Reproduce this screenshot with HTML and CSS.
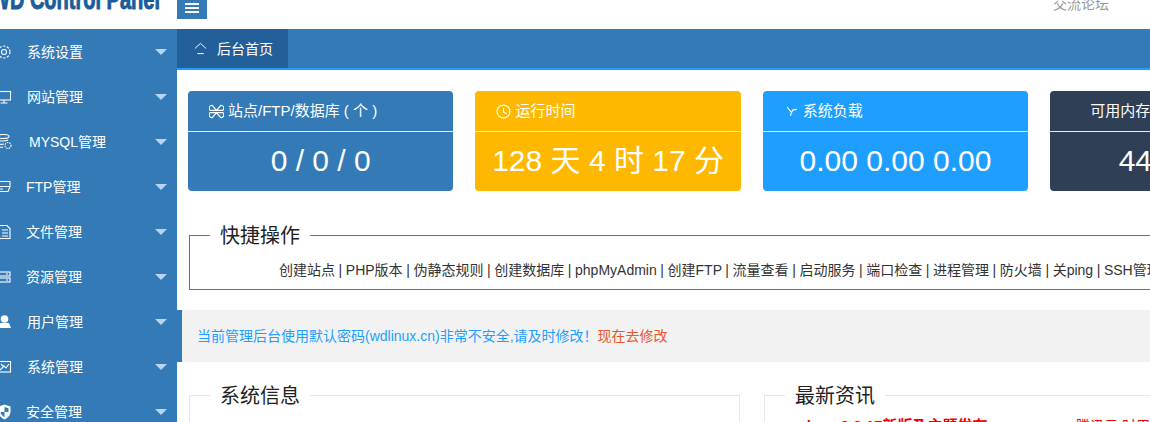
FILE: index.html
```html
<!DOCTYPE html>
<html lang="zh-CN">
<head>
<meta charset="utf-8">
<title>WD Control Panel</title>
<link rel="stylesheet" href="styles.css">
</head>
<body>
<div class="app">
  <header class="topbar">
    <div class="logo"><span class="logo-text">WD Control Panel</span></div>
    <button class="toggle" type="button" aria-label="菜单"><span></span><span></span><span></span></button>
    <a class="forum">交流论坛</a>
  </header>
  <nav class="side">
    <a class="item"><svg class="ico" viewBox="0 0 16 16"><circle cx="8" cy="8" r="2.500"/><circle cx="8" cy="8" r="6" stroke-dasharray="2.400 1.400"/></svg><span class="label">系统设置</span><i class="caret"></i></a>
    <a class="item"><svg class="ico" viewBox="0 0 16 16"><rect x="1.500" y="2.500" width="13" height="8.500"/><path d="M8 11v3M4.500 14h7"/></svg><span class="label">网站管理</span><i class="caret"></i></a>
    <a class="item"><svg class="ico" viewBox="0 0 16 16"><ellipse cx="7" cy="2.500" rx="6" ry="2"/><path d="M1 5.500c2 2 8 2 11 .5M1 9c2 1.500 5 1.500 7 1M1 12c2 1.500 5 1.500 6 1"/><circle cx="12" cy="11.500" r="3" stroke-dasharray="1.500 1"/></svg><span class="label label-wide">MYSQL管理</span><i class="caret"></i></a>
    <a class="item"><svg class="ico" viewBox="0 0 16 16"><path d="M3 2.500h11v5H3M9 7.500h5l-2 5H1M2 10h5"/></svg><span class="label label-tight">FTP管理</span><i class="caret"></i></a>
    <a class="item"><svg class="ico" viewBox="0 0 16 16"><path d="M4 1.500h7l3 3v10H4M6 6h6M6 9h6M6 12h6"/></svg><span class="label label-tight">文件管理</span><i class="caret"></i></a>
    <a class="item"><svg class="ico" viewBox="0 0 16 16"><rect x="3" y="3" width="11" height="4"/><rect x="3" y="9" width="11" height="4"/><path d="M10 5h2M10 11h2"/></svg><span class="label label-tight">资源管理</span><i class="caret"></i></a>
    <a class="item"><svg class="ico" viewBox="0 0 16 16"><circle class="solid" cx="8.500" cy="5" r="3.800"/><path class="solid" d="M4 9h9l2 5H3z"/></svg><span class="label">用户管理</span><i class="caret"></i></a>
    <a class="item"><svg class="ico" viewBox="0 0 16 16"><rect x="2.500" y="2.500" width="12" height="10.500"/><path d="M4 11l4-4 2 2 3-4M5 5l3 3"/></svg><span class="label">系统管理</span><i class="caret"></i></a>
    <a class="item"><svg class="ico" viewBox="0 0 16 16"><path class="solid" d="M8.500 .5l6 2v5c0 4-3 6.500-6 8-3-1.500-6-4-6-8v-5zM8.500 3v5h-4c.3 2.500 2 4 4 5.300V8h4V4.200z" fill-rule="evenodd"/></svg><span class="label label-tight">安全管理</span><i class="caret"></i></a>
  </nav>
  <main class="main">
    <div class="tabs">
      <a class="tab"><svg class="tab-ico" viewBox="0 0 14 14"><path d="M1 7l6-5.500L13 7M3.500 12.500h7"/></svg>后台首页</a>
    </div>
    <section class="cards">
      <article class="card card-blue">
        <h3 class="card-head"><svg class="card-ico" viewBox="0 0 14 14"><path d="M7 6L3 1.200a2.800 2.800 0 0 0-2 4.800zM7 6l4-4.800a2.800 2.800 0 0 1 2 4.800zM7 8l-4 4.800a2.800 2.800 0 0 1-2-4.800zM7 8l4 4.800a2.800 2.800 0 0 0 2-4.800z"/></svg>站点/FTP/数据库 ( 个 )</h3>
        <div class="card-val">0 / 0 / 0</div>
      </article>
      <article class="card card-amber">
        <h3 class="card-head"><svg class="card-ico" viewBox="0 0 14 14"><circle cx="7" cy="7" r="6"/><path d="M7 3.500V7.500L10 9"/></svg>运行时间</h3>
        <div class="card-val">128 天 4 时 17 分</div>
      </article>
      <article class="card card-sky">
        <h3 class="card-head"><svg class="card-ico" viewBox="0 0 14 14"><path d="M3 3l4 5 1.500-2.500L12 5M6 11l1-3"/></svg>系统负载</h3>
        <div class="card-val">0.00 0.00 0.00</div>
      </article>
      <article class="card card-navy">
        <h3 class="card-head card-head-plain">可用内存</h3>
        <div class="card-val">441.2 MB</div>
      </article>
    </section>
    <fieldset class="box box-quick">
      <legend class="box-title">快捷操作</legend>
      <p class="links">创建站点 | PHP版本 | 伪静态规则 | 创建数据库 | phpMyAdmin | 创建FTP | 流量查看 | 启动服务 | 端口检查 | 进程管理 | 防火墙 | 关ping | SSH管理</p>
    </fieldset>
    <div class="notice">当前管理后台使用默认密码(wdlinux.cn)非常不安全,请及时修改！<a class="notice-link">现在去修改</a></div>
    <div class="cols">
      <fieldset class="box box-info">
        <legend class="box-title">系统信息</legend>
      </fieldset>
      <fieldset class="box box-news">
        <legend class="box-title">最新资讯</legend>
        <div class="news"><b class="news-main">wdcp v3.3.17新版及主题发布</b><span class="news-side">腾讯云 时用</span></div>
      </fieldset>
    </div>
  </main>
</div>
</body>
</html>
```
FILE: styles.css
```css
* { box-sizing: border-box; }
html, body { margin: 0; height: 100%; overflow: hidden; background: #fff; }
body { font: 14px/20px "Liberation Sans", "Noto Sans CJK SC", sans-serif; color: #333; }

.app {
  width: 1150px; height: 422px; overflow: hidden;
  display: grid; grid-template-columns: 177px 973px; grid-template-rows: 29px 393px;
}

.topbar { grid-column: 1 / 3; display: flex; align-items: flex-start; height: 29px; }
.logo {
  width: 177px; margin: -16px 0 0 -9px; flex: none;
  font: bold 29px/30px "Liberation Sans", sans-serif;
  color: #1c5c99; white-space: nowrap; -webkit-text-stroke: 1px #1c5c99;
}
.logo-text { display: inline-block; transform: scaleX(.69); transform-origin: 0 0; }
.toggle {
  flex: none; width: 30px; height: 19px; margin: 0 0 0 9px; padding: 3px 8px 0; border: 0;
  background: #337ab7; display: flex; flex-direction: column; gap: 2px; align-items: stretch;
}
.toggle span { display: block; height: 2px; background: #fff; }
.forum { margin: -6px 0 0 846px; color: #999; flex: none; }

.side { background: #337ab7; overflow: hidden; }
.item { display: flex; align-items: center; height: 45px; color: #fff; }
.ico {
  width: 16px; height: 16px; flex: none; margin: 0 15px 0 -4px;
  fill: none; stroke: #fff; stroke-width: 1.1;
}
.ico .solid { fill: #fff; stroke: none; }
.label { white-space: nowrap; }
.label-wide { margin-left: 2px; }
.label-tight { margin-left: -1px; }
.caret {
  margin: 0 10px 0 auto; width: 0; height: 0;
  border-style: solid; border-width: 6px 6px 0; border-color: #b9d3f2 transparent transparent;
}

.main { overflow: hidden; min-width: 0; }
.tabs { height: 41px; background: #337ab7; border-bottom: 2px solid #1e9fff; display: flex; }
.tab {
  width: 111px; height: 39px; padding-left: 17px; background: #23609a; color: #fff;
  display: flex; align-items: center; gap: 10px;
}
.tab-ico { width: 13px; height: 13px; fill: none; stroke: #fff; stroke-width: 1; }

.cards { display: flex; gap: 22px; width: 1140px; padding: 21px 0 0 11px; }
.card { flex: none; width: 265.4px; height: 100px; border-radius: 4px; color: #fff; overflow: hidden; }
.card-blue { background: #337ab7; }
.card-amber { background: #ffb800; }
.card-sky { background: #1e9fff; }
.card-navy { background: #2f4056; }
.card-head {
  margin: 0; height: 41px; padding: 0 0 0 21px; border-bottom: 1px solid #e8eef5;
  display: flex; align-items: center; gap: 4px;
  font-size: 15px; font-weight: normal; white-space: nowrap;
}
.card-head-plain { padding-left: 40px; }
.card-ico { width: 15px; height: 15px; flex: none; fill: none; stroke: #fff; stroke-width: 1.1; }
.card-val { text-align: center; font-size: 30px; line-height: 58px; white-space: nowrap; }

.box { margin: 0; padding: 0; min-width: 0; border: 1px solid #e6e6e6; }
.box-title { margin-left: 20px; padding: 2px 10px 0; font-size: 20px; line-height: 24px; color: #222; }
.box-quick { width: 990px; height: 68px; margin: 31px 0 0 12px; border-color: #3d7fa6; }
.links { margin: 12px 0 0; padding-left: 89px; color: #333; white-space: nowrap; word-spacing: -.3px; }
.notice {
  width: 973px; height: 52px; margin-top: 20px; padding-left: 15px;
  border-left: 5px solid #337ab7; background: #f2f2f2; color: #1e9fff; line-height: 52px; white-space: nowrap;
}
.notice-link { color: #e8562f; }
.cols { display: flex; gap: 24px; margin: 20px 0 0 12px; width: 1000px; }
.box-info { width: 551px; flex: none; height: 60px; }
.box-news { width: 425px; flex: none; height: 60px; }
.news { display: flex; padding: 8px 0 0 25px; color: #e00; white-space: nowrap; }
.news-main { width: 286px; flex: none; font-size: 15px; }
```
